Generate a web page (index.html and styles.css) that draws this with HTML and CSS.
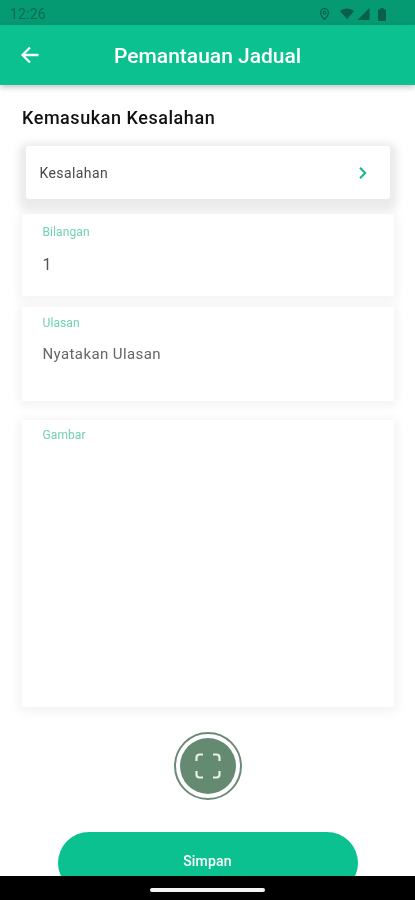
FILE: index.html
```html
<!DOCTYPE html>
<html lang="ms">
<head>
<meta charset="utf-8">
<title>Pemantauan Jadual</title>
<link rel="stylesheet" href="styles.css">
</head>
<body>
<div class="screen">
  <div class="status">
    <span class="time">12:26</span>
    <div class="status-icons">
      <svg width="11" height="14" viewBox="0 0 12 14"><path d="M6 1.2a4.3 4.3 0 0 0-4.3 4.3C1.700 8.500 6 12.800 6 12.800s4.300-4.300 4.300-7.300A4.300 4.300 0 0 0 6 1.200z" fill="none" stroke="#0a5f48" stroke-width="1.400"/><circle cx="6" cy="5.500" r="1.500" fill="none" stroke="#0a5f48" stroke-width="1.200"/></svg>
      <svg class="wifi" width="14" height="12" viewBox="0 0 16 13"><path d="M0 3.200C4.500-.8 11.500-.8 16 3.200L8 12.500z" fill="#0a5f48"/></svg>
      <svg class="signal" width="13" height="12" viewBox="0 0 13 13"><path d="M13 0v13H0z" fill="#0a5f48"/></svg>
      <svg class="battery" width="8" height="13" viewBox="0 0 8 13"><path d="M2.500 0h3v1.200H7a1 1 0 0 1 1 1V12a1 1 0 0 1-1 1H1a1 1 0 0 1-1-1V2.200a1 1 0 0 1 1-1h1.500z" fill="#0a5f48"/></svg>
    </div>
  </div>
  <header class="appbar">
    <svg class="back" width="20" height="20" viewBox="0 0 20 20"><path d="M18.500 10H3M10 2.500 2.500 10l7.500 7.500" fill="none" stroke="#f2fbf8" stroke-width="2.300"/></svg>
    <h1 class="title">Pemantauan Jadual</h1>
  </header>
  <main class="content">
    <h2 class="heading">Kemasukan Kesalahan</h2>
    <div class="selector-wrap">
      <div class="selector">
        <span>Kesalahan</span>
        <svg width="10" height="14" viewBox="0 0 10 14"><path d="M2 1.800 7.200 7 2 12.200" fill="none" stroke="#12b78a" stroke-width="2"/></svg>
      </div>
    </div>
    <section class="field field-count">
      <label class="label">Bilangan</label>
      <div class="value">1</div>
    </section>
    <section class="field field-note">
      <label class="label">Ulasan</label>
      <div class="value value-note">Nyatakan Ulasan</div>
    </section>
    <section class="field field-image">
      <label class="label">Gambar</label>
    </section>
    <div class="capture-row">
      <div class="capture">
        <div class="capture-inner">
          <svg width="26" height="26" viewBox="0 0 26 26"><path d="M1.500 8V4.500a3 3 0 0 1 3-3H8M18 1.500h3.500a3 3 0 0 1 3 3V8M24.500 18v3.500a3 3 0 0 1-3 3H18M8 24.500H4.500a3 3 0 0 1-3-3V18" fill="none" stroke="#e6f2e6" stroke-width="2.200"/></svg>
        </div>
      </div>
    </div>
    <button class="save">Simpan</button>
  </main>
  <div class="navbar"><span class="pill"></span></div>
</div>
</body>
</html>
```
FILE: styles.css
```css
* { box-sizing: border-box; }
html, body { margin: 0; padding: 0; }
body { background: #fff; font-family: Roboto, "Liberation Sans", sans-serif; }
.screen { position: relative; width: 415px; height: 900px; overflow: hidden; background: #fff; display: flex; flex-direction: column; filter: blur(.45px); }
.status { height: 25px; flex: none; background: #069a73; display: flex; align-items: center; justify-content: space-between; padding: 3px 29px 0 10px; }
.time { font-size: 14px; color: #0a6a50; letter-spacing: .2px; }
.status-icons { display: flex; align-items: center; gap: 3px; }
.status-icons svg:first-child { margin-right: 7px; }
.battery { margin-left: 5px; }
.appbar { height: 60px; flex: none; background: #0bc190; display: flex; align-items: center; padding: 0 20px; box-shadow: 0 2px 6px rgba(0,0,0,.25); position: relative; z-index: 1; }
.back { flex: none; }
.title { margin: 2px 0 0 74px; font-size: 21px; font-weight: 500; color: #fff; white-space: nowrap; }
.content { flex: 1; display: flex; flex-direction: column; align-items: center; padding: 0 21px; }
.heading { align-self: flex-start; margin: 22px 0 -1px 1px; font-size: 18px; line-height: 22px; font-weight: 500; color: #111; letter-spacing: .55px; }
.selector-wrap { width: 372px; height: 71px; margin-top: 15px; padding: 3px 4px 0; }
.selector { height: 53px; background: #fff; border-radius: 3px; display: flex; align-items: center; justify-content: space-between; padding: 0 22px 0 14px; font-size: 14px; color: #4a4a4a; letter-spacing: .4px; box-shadow: 0 4px 9px 7px rgba(0,0,0,.085); }
.field { width: 372px; background: #fff; padding: 10px 21px 0; box-shadow: 0 2px 10px 3px rgba(0,0,0,.05); }
.label { display: block; font-size: 12px; line-height: 16px; color: #6fd1b0; letter-spacing: .1px; }
.value { font-size: 16px; line-height: 20px; color: #555; margin-top: 15px; }
.field-count { height: 82px; }
.field-note { height: 94px; margin-top: 11px; padding-top: 8px; }
.value-note { margin-top: 13px; font-size: 15px; letter-spacing: .4px; color: #666; }
.field-image { height: 287px; margin-top: 19px; padding-top: 7px; }
.capture-row { margin-top: 25px; }
.capture { width: 68px; height: 68px; border-radius: 50%; border: 2px solid #6b8b74; padding: 4px; background: #fff; }
.capture-inner { width: 100%; height: 100%; border-radius: 50%; background: #658a72; display: flex; align-items: center; justify-content: center; }
.save { width: 300px; height: 62px; flex: none; margin-top: 32px; border: 0; border-radius: 31px; background: #0bc190; color: #fff; font: 500 14px Roboto, "Liberation Sans", sans-serif; letter-spacing: .2px; padding: 0 0 4px; }
.navbar { position: absolute; left: 0; right: 0; bottom: 0; height: 24px; background: #000; display: flex; justify-content: center; align-items: center; }
.pill { width: 115px; height: 4px; border-radius: 2px; background: #f4f4f4; margin-top: 4px; }
```
